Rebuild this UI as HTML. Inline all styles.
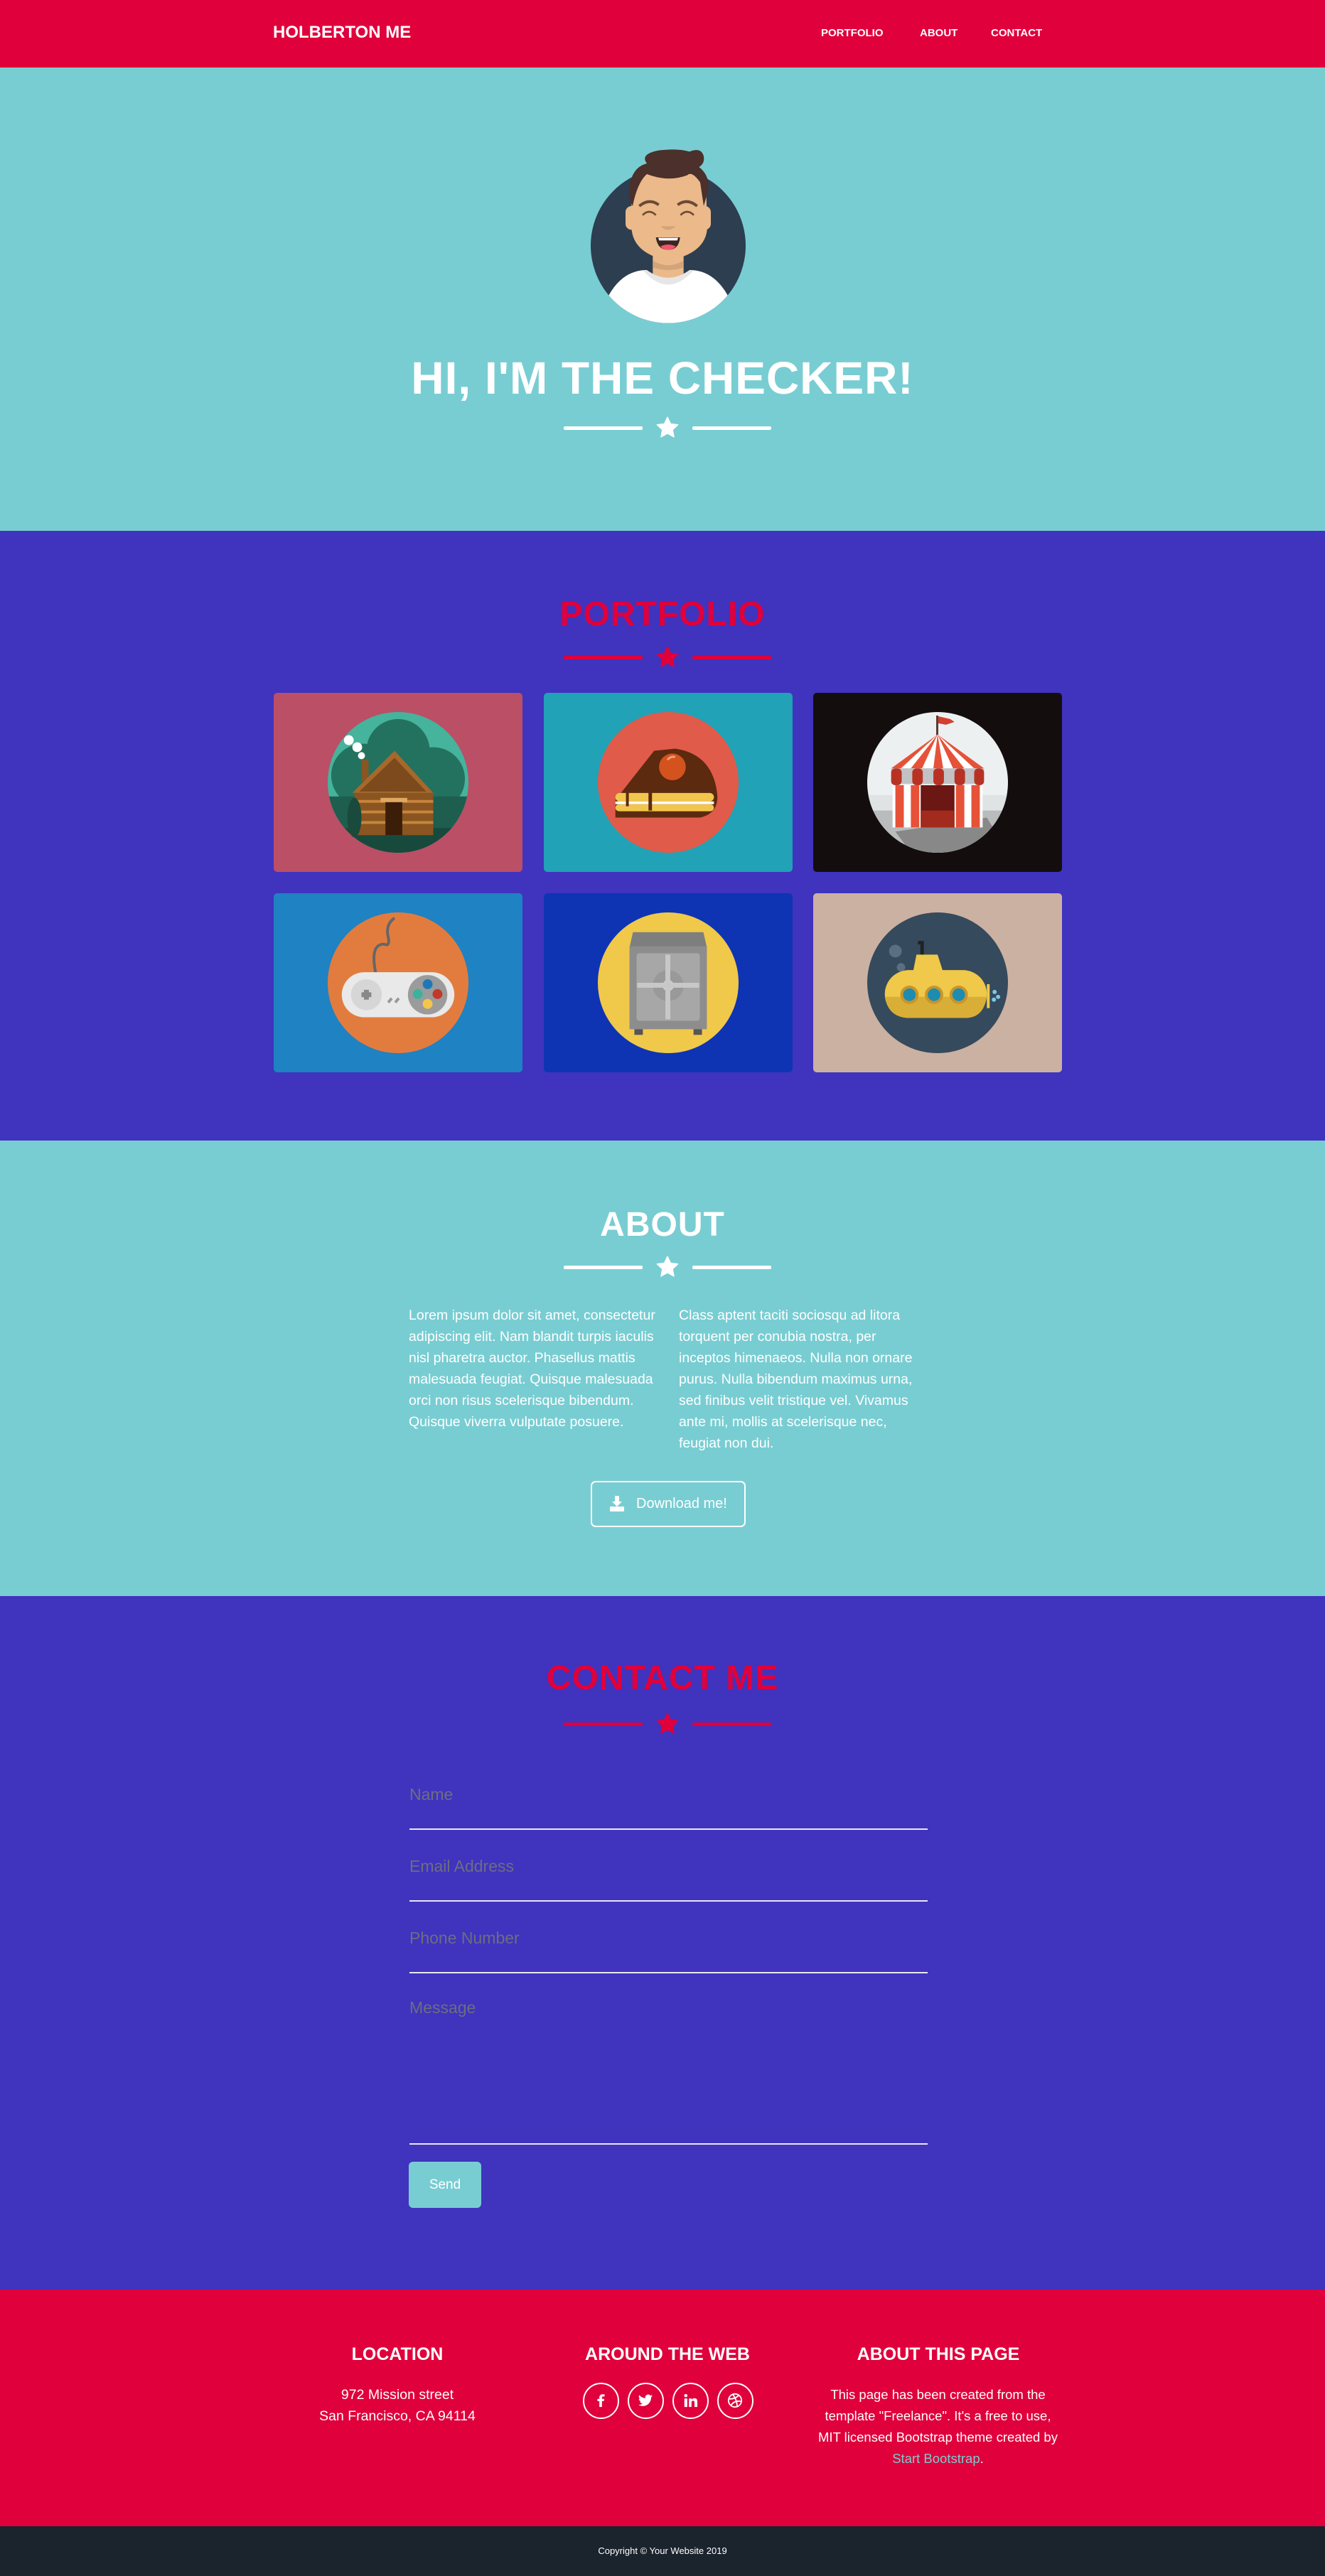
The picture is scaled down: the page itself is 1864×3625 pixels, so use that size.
<!DOCTYPE html>
<html><head><meta charset="utf-8">
<style>
*{margin:0;padding:0;box-sizing:border-box}
body{width:1864px;height:3625px;position:relative;font-family:"Liberation Sans",sans-serif;overflow:hidden;background:#fff}
.abs{position:absolute}
.sec{position:absolute;left:0;width:1864px}
.h{font-weight:bold;text-align:center;position:absolute;left:0;width:1864px;line-height:1}
.card{position:absolute;width:350px;height:252px;border-radius:5px;overflow:hidden}
.card svg{position:absolute;left:76px;top:27px;width:198px;height:198px}
.p{position:absolute;color:#fff;font-size:19.5px;line-height:30px}
.lbl{position:absolute;left:576px;color:#6b6e80;font-size:23px;line-height:1}
.ln{position:absolute;left:576px;width:729px;height:2px;background:#e8e8f0}
.fh{position:absolute;color:#fff;font-weight:bold;font-size:25px;text-align:center;width:400px;line-height:1}
.ft{position:absolute;color:#fff;font-size:19.5px;line-height:30px;text-align:center;width:400px}
.soc{position:absolute;top:3353px;width:51px;height:51px;border:2.5px solid #fff;border-radius:50%}
.soc svg{position:absolute;left:12px;top:12px;width:22px;height:22px}
</style></head><body>

<!-- nav -->
<div class="sec" style="top:0;height:95px;background:#e0003b"></div>
<div class="abs" style="left:384px;top:34px;color:#fff;font-weight:bold;font-size:24px;line-height:24px">HOLBERTON ME</div>
<div class="abs" style="left:1155px;top:39px;color:#fff;font-weight:bold;font-size:15px;line-height:15px">PORTFOLIO</div>
<div class="abs" style="left:1294px;top:39px;color:#fff;font-weight:bold;font-size:15px;line-height:15px">ABOUT</div>
<div class="abs" style="left:1394px;top:39px;color:#fff;font-weight:bold;font-size:15px;line-height:15px">CONTACT</div>

<!-- hero -->
<div class="sec" style="top:95px;height:652px;background:#78cdd2"></div>
<svg class="abs" style="left:800px;top:180px" width="270" height="290" viewBox="0 0 810 870">
<defs><clipPath id="cc"><circle cx="420" cy="497" r="327"/></clipPath></defs>
<circle cx="420" cy="497" r="327" fill="#2d3e50"/>
<g clip-path="url(#cc)">
<rect x="355" y="520" width="130" height="120" fill="#ebb98a"/>
<path d="M355 560 Q420 600 485 560 L485 590 Q420 610 355 590Z" fill="#d3a47a"/>
<path d="M170 705 Q230 600 330 600 Q420 690 510 600 Q610 600 670 705 L720 900 L120 900Z" fill="#fff"/>
<path d="M315 603 Q420 720 525 603 L510 600 Q420 665 330 600Z" fill="#e6e6e6"/>
</g>
<path d="M265 250 Q270 180 340 185 L500 190 Q575 200 580 260 L585 420 Q580 530 420 560 Q270 530 265 420Z" fill="#ebb98a"/>
<rect x="240" y="330" width="50" height="100" rx="25" fill="#ebb98a"/>
<rect x="550" y="330" width="50" height="100" rx="25" fill="#ebb98a"/>
<path d="M255 300 Q250 170 330 150 Q300 110 380 95 Q460 85 510 100 Q560 80 570 120 Q575 150 550 165 Q595 200 590 260 L570 330 L555 230 Q520 180 500 200 Q420 230 330 195 Q290 230 270 330Z" fill="#4b302b"/>
<path d="M298 330 Q340 295 380 325" stroke="#6d4a34" stroke-width="12" fill="none"/>
<path d="M460 325 Q500 295 542 330" stroke="#6d4a34" stroke-width="12" fill="none"/>
<path d="M312 368 Q340 340 368 368" stroke="#6d4a34" stroke-width="8" fill="none"/>
<path d="M472 368 Q500 340 528 368" stroke="#6d4a34" stroke-width="8" fill="none"/>
<path d="M388 415 Q420 445 452 415Z" fill="#d3a47a"/>
<path d="M368 462 L470 462 Q465 515 420 515 Q375 515 368 462Z" fill="#3a2520"/>
<path d="M378 464 L462 464 L458 475 L382 475Z" fill="#fff"/>
<path d="M388 500 Q420 485 452 500 Q440 515 420 515 Q398 515 388 500Z" fill="#f2546f"/>
</svg>
<div class="h" style="top:500px;font-size:64px;color:#fff;letter-spacing:1px">HI, I'M THE CHECKER!</div>
<div class="abs" style="left:793px;top:600px;width:111px;height:5px;background:#fff;border-radius:2px"></div>
<div class="abs" style="left:974px;top:600px;width:111px;height:5px;background:#fff;border-radius:2px"></div>
<svg class="abs" style="left:922px;top:585px" width="34" height="34" viewBox="0 0 24 24"><path d="M12 1.5l3.1 6.6 7.2.9-5.3 5 1.4 7.1L12 17.6 5.6 21.1 7 14 1.7 9l7.2-.9z" fill="#fff" stroke="#fff" stroke-linejoin="round" stroke-width="1"/></svg>

<!-- portfolio -->
<div class="sec" style="top:747px;height:858px;background:#4033be"></div>
<div class="h" style="top:841px;font-size:48px;color:#e0003b;letter-spacing:1px">PORTFOLIO</div>
<div class="abs" style="left:793px;top:923px;width:111px;height:5px;background:#e0003b;border-radius:2px"></div>
<div class="abs" style="left:974px;top:923px;width:111px;height:5px;background:#e0003b;border-radius:2px"></div>
<svg class="abs" style="left:922px;top:908px" width="34" height="34" viewBox="0 0 24 24"><path d="M12 1.5l3.1 6.6 7.2.9-5.3 5 1.4 7.1L12 17.6 5.6 21.1 7 14 1.7 9l7.2-.9z" fill="#e0003b" stroke="#e0003b" stroke-linejoin="round"/></svg>

<div class="card" style="left:385px;top:975px;background:#ba4f66">
<svg viewBox="0 0 200 200"><defs><clipPath id="c1"><circle cx="100" cy="100" r="100"/></clipPath></defs>
<circle cx="100" cy="100" r="100" fill="#46b39c"/>
<g clip-path="url(#c1)">
<circle cx="50" cy="90" r="45" fill="#23725f"/><circle cx="100" cy="55" r="45" fill="#23725f"/><circle cx="150" cy="95" r="45" fill="#23725f"/>
<rect x="0" y="120" width="200" height="80" fill="#1d5e4e"/>
<rect x="0" y="165" width="200" height="40" fill="#174a3d"/>
</g>
<circle cx="30" cy="40" r="7" fill="#fff"/><circle cx="42" cy="50" r="7" fill="#fff"/><circle cx="48" cy="62" r="5" fill="#fff"/>
<rect x="48" y="68" width="10" height="30" fill="#8a5520"/>
<path d="M35 115 L95 55 L150 115Z" fill="#a8682b"/>
<path d="M45 113 L95 65 L140 113Z" fill="#7c4a1c"/>
<rect x="38" y="115" width="112" height="60" fill="#8a5520"/>
<g fill="#c8843c"><rect x="38" y="125" width="112" height="4"/><rect x="38" y="140" width="112" height="4"/><rect x="38" y="155" width="112" height="4"/></g>
<rect x="82" y="128" width="24" height="47" fill="#3a1e0a"/>
<rect x="75" y="122" width="38" height="6" fill="#e0a860"/>
<ellipse cx="38" cy="150" rx="10" ry="28" fill="#1a4a3c"/>
</svg></div>

<div class="card" style="left:765px;top:975px;background:#21a2b6">
<svg viewBox="0 0 200 200"><circle cx="100" cy="100" r="100" fill="#e05b4a"/>
<path d="M80 55 L25 125 L25 150 L145 150 Q170 145 170 120 Q165 60 110 52Z" fill="#5c2a0e"/>
<rect x="25" y="115" width="140" height="12" rx="6" fill="#f2c64c"/>
<rect x="25" y="131" width="140" height="10" rx="5" fill="#f2c64c"/>
<rect x="25" y="127" width="140" height="4" fill="#fff"/>
<rect x="40" y="112" width="4" height="22" fill="#5c2a0e"/><rect x="72" y="112" width="5" height="28" fill="#5c2a0e"/>
<circle cx="106" cy="78" r="19" fill="#d3521e"/>
<path d="M99 68 Q104 62 110 64" stroke="#f2a07a" stroke-width="3" fill="none"/>
</svg></div>

<div class="card" style="left:1144px;top:975px;background:#130e0d">
<svg viewBox="0 0 200 200"><defs><clipPath id="c3"><circle cx="100" cy="100" r="100"/></clipPath></defs>
<circle cx="100" cy="100" r="100" fill="#ecf0f1"/>
<g clip-path="url(#c3)">
<rect x="0" y="118" width="200" height="22" fill="#dfe3e4"/>
<rect x="0" y="140" width="200" height="70" fill="#b9bbbc"/>
<path d="M40 170 L170 150 L200 200 L70 210Z" fill="#888"/>
</g>
<rect x="98" y="5" width="3" height="30" fill="#5a3a36"/>
<path d="M101 6 L118 10 L124 14 L112 18 L101 16Z" fill="#d3402e"/>
<path d="M34 80 L100 32 L166 80Z" fill="#fff"/>
<g fill="#e65238"><path d="M100 32 L34 80 L48 80Z"/><path d="M100 32 L62 80 L78 80Z"/><path d="M100 32 L94 80 L108 80Z"/><path d="M100 32 L122 80 L138 80Z"/><path d="M100 32 L152 80 L166 80Z"/></g>
<rect x="34" y="80" width="132" height="22" fill="#c2c2c4"/>
<g fill="#b83224"><rect x="34" y="80" width="15" height="24" rx="6"/><rect x="64" y="80" width="15" height="24" rx="6"/><rect x="94" y="80" width="15" height="24" rx="6"/><rect x="124" y="80" width="15" height="24" rx="6"/><rect x="152" y="80" width="14" height="24" rx="6"/></g>
<rect x="36" y="104" width="128" height="60" fill="#fff"/>
<g fill="#e65238"><rect x="40" y="104" width="12" height="60"/><rect x="62" y="104" width="12" height="60"/><rect x="126" y="104" width="12" height="60"/><rect x="148" y="104" width="12" height="60"/></g>
<rect x="76" y="104" width="48" height="60" fill="#6b1713"/>
<rect x="76" y="140" width="48" height="24" fill="#a22b1e"/>
</svg></div>

<div class="card" style="left:385px;top:1257px;background:#1f82c2">
<svg viewBox="0 0 200 200"><circle cx="100" cy="100" r="100" fill="#e27c3e"/>
<path d="M68 85 Q60 45 80 45 Q90 50 85 30 Q84 15 95 8" stroke="#666" stroke-width="4" fill="none"/>
<rect x="20" y="85" width="160" height="64" rx="32" fill="#e9e9e9"/>
<circle cx="55" cy="117" r="22" fill="#d6d6d6"/><circle cx="142" cy="117" r="28" fill="#9b9b9b"/>
<path d="M48 117 h14 M55 110 v14" stroke="#888" stroke-width="7"/>
<circle cx="142" cy="102" r="7" fill="#1e78b8"/><circle cx="128" cy="116" r="7" fill="#3bb39c"/><circle cx="156" cy="116" r="7" fill="#c0392b"/><circle cx="142" cy="130" r="7" fill="#f2c64c"/>
<path d="M86 128 l5 -6 M96 128 l5 -6" stroke="#999" stroke-width="4"/>
</svg></div>

<div class="card" style="left:765px;top:1257px;background:#0e34b4">
<svg viewBox="0 0 200 200"><circle cx="100" cy="100" r="100" fill="#f0c84a"/>
<path d="M50 28 L150 28 L155 50 L45 50Z" fill="#7e7e7e"/>
<rect x="45" y="48" width="110" height="118" fill="#8d8d8d"/>
<rect x="55" y="58" width="90" height="96" rx="4" fill="#a7a7a7"/>
<circle cx="100" cy="104" r="22" fill="#999"/><circle cx="100" cy="104" r="8" fill="#ccc"/>
<rect x="56" y="100" width="88" height="7" fill="#c8c8c8"/><rect x="96" y="60" width="7" height="92" fill="#c8c8c8"/>
<rect x="52" y="166" width="12" height="8" fill="#555"/><rect x="136" y="166" width="12" height="8" fill="#555"/>
</svg></div>

<div class="card" style="left:1144px;top:1257px;background:#cbb1a2">
<svg viewBox="0 0 200 200"><circle cx="100" cy="100" r="100" fill="#354a5c"/>
<circle cx="40" cy="55" r="9" fill="#5a6f80"/><circle cx="48" cy="78" r="6" fill="#5a6f80"/>
<path d="M72 43 h6 v30" stroke="#222" stroke-width="5" fill="none"/>
<path d="M65 85 L70 60 L100 60 L108 85Z" fill="#f0c84a"/>
<rect x="25" y="82" width="145" height="68" rx="34" fill="#f0c84a"/>
<path d="M25 120 Q30 150 60 150 L140 150 Q165 150 170 120Z" fill="#d8ae36"/>
<circle cx="60" cy="117" r="13" fill="#c7952a"/><circle cx="60" cy="117" r="9" fill="#1e8cb0"/>
<circle cx="95" cy="117" r="13" fill="#c7952a"/><circle cx="95" cy="117" r="9" fill="#1e8cb0"/>
<circle cx="130" cy="117" r="13" fill="#c7952a"/><circle cx="130" cy="117" r="9" fill="#1e8cb0"/>
<rect x="170" y="102" width="4" height="34" fill="#f0c84a"/>
<circle cx="181" cy="113" r="3" fill="#7ec8e8"/><circle cx="186" cy="120" r="3" fill="#7ec8e8"/><circle cx="180" cy="124" r="3" fill="#7ec8e8"/>
</svg></div>

<!-- about -->
<div class="sec" style="top:1605px;height:641px;background:#78cdd2"></div>
<div class="h" style="top:1700px;font-size:48px;color:#fff;letter-spacing:1px">ABOUT</div>
<div class="abs" style="left:793px;top:1781px;width:111px;height:5px;background:#fff;border-radius:2px"></div>
<div class="abs" style="left:974px;top:1781px;width:111px;height:5px;background:#fff;border-radius:2px"></div>
<svg class="abs" style="left:922px;top:1766px" width="34" height="34" viewBox="0 0 24 24"><path d="M12 1.5l3.1 6.6 7.2.9-5.3 5 1.4 7.1L12 17.6 5.6 21.1 7 14 1.7 9l7.2-.9z" fill="#fff" stroke="#fff" stroke-linejoin="round"/></svg>
<div class="p" style="left:575px;top:1836px;width:370px">Lorem ipsum dolor sit amet, consectetur adipiscing elit. Nam blandit turpis iaculis nisl pharetra auctor. Phasellus mattis malesuada feugiat. Quisque malesuada orci non risus scelerisque bibendum. Quisque viverra vulputate posuere.</div>
<div class="p" style="left:955px;top:1836px;width:350px">Class aptent taciti sociosqu ad litora torquent per conubia nostra, per inceptos himenaeos. Nulla non ornare purus. Nulla bibendum maximus urna, sed finibus velit tristique vel. Vivamus ante mi, mollis at scelerisque nec, feugiat non dui.</div>
<div class="abs" style="left:831px;top:2084px;width:218px;height:65px;border:2.5px solid #fff;border-radius:7px;color:#fff;font-size:20px;line-height:60px;padding-left:62px">Download me!</div>
<svg class="abs" style="left:858px;top:2105px" width="20" height="22" viewBox="0 0 20 22"><path d="M7 0h6v8h4l-7 7-7-7h4z" fill="#fff"/><rect x="0" y="15" width="20" height="7" rx="1" fill="#fff"/></svg>

<!-- contact -->
<div class="sec" style="top:2246px;height:976px;background:#4033be"></div>
<div class="h" style="top:2338px;font-size:48px;color:#e0003b;letter-spacing:1px">CONTACT ME</div>
<div class="abs" style="left:793px;top:2424px;width:111px;height:5px;background:#e0003b;border-radius:2px"></div>
<div class="abs" style="left:974px;top:2424px;width:111px;height:5px;background:#e0003b;border-radius:2px"></div>
<svg class="abs" style="left:922px;top:2409px" width="34" height="34" viewBox="0 0 24 24"><path d="M12 1.5l3.1 6.6 7.2.9-5.3 5 1.4 7.1L12 17.6 5.6 21.1 7 14 1.7 9l7.2-.9z" fill="#e0003b" stroke="#e0003b" stroke-linejoin="round"/></svg>
<div class="lbl" style="top:2514px">Name</div><div class="ln" style="top:2573px"></div>
<div class="lbl" style="top:2615px">Email Address</div><div class="ln" style="top:2674px"></div>
<div class="lbl" style="top:2716px">Phone Number</div><div class="ln" style="top:2775px"></div>
<div class="lbl" style="top:2814px">Message</div><div class="ln" style="top:3016px"></div>
<div class="abs" style="left:575px;top:3042px;width:102px;height:65px;background:#78cdd2;border-radius:6px;color:#fff;font-size:19px;line-height:65px;text-align:center">Send</div>

<!-- footer -->
<div class="sec" style="top:3222px;height:333px;background:#e0003b"></div>
<div class="fh" style="left:359px;top:3301px">LOCATION</div>
<div class="fh" style="left:739px;top:3301px">AROUND THE WEB</div>
<div class="fh" style="left:1120px;top:3301px">ABOUT THIS PAGE</div>
<div class="ft" style="left:359px;top:3355px">972 Mission street<br>San Francisco, CA 94114</div>
<div class="ft" style="left:1147px;top:3355px;width:345px;font-size:18.5px">This page has been created from the template "Freelance". It's a free to use, MIT licensed Bootstrap theme created by <span style="color:#78cdd2">Start Bootstrap</span>.</div>
<div class="soc" style="left:820px"><svg viewBox="0 0 24 24"><path d="M14 22V13h3l.5-3.5H14V7.5c0-1 .3-1.7 1.8-1.7H18V2.6C17.6 2.5 16.4 2.4 15 2.4c-3 0-5 1.8-5 5.1v2H7V13h3v9z" fill="#fff"/></svg></div>
<div class="soc" style="left:883px"><svg viewBox="0 0 24 24"><path d="M23 5c-.8.4-1.7.6-2.6.7.9-.6 1.6-1.4 2-2.5-.9.5-1.900.9-2.9 1.1A4.5 4.5 0 0 0 11.8 8.4 12.8 12.8 0 0 1 2.5 3.7a4.5 4.5 0 0 0 1.4 6c-.7 0-1.4-.2-2-.6 0 2.2 1.5 4 3.6 4.4-.7.2-1.4.2-2 .1.6 1.8 2.2 3.100 4.2 3.1A9 9 0 0 1 1 18.6 12.8 12.8 0 0 0 7.9 20.6c8.3 0 12.8-6.9 12.8-12.8v-.6C21.6 6.6 22.4 5.8 23 5z" fill="#fff"/></svg></div>
<div class="soc" style="left:946px"><svg viewBox="0 0 24 24"><rect x="3" y="9" width="4.5" height="13" fill="#fff"/><circle cx="5.2" cy="4.5" r="2.5" fill="#fff"/><path d="M10 9h4.3v1.8c.6-1.1 2-2.2 4.1-2.2 4.3 0 4.6 2.8 4.6 6.4V22h-4.5v-6.2c0-1.5 0-3.4-2.1-3.4s-2.4 1.6-2.4 3.3V22H10z" fill="#fff"/></svg></div>
<div class="soc" style="left:1009px"><svg viewBox="0 0 24 24" fill="none" stroke="#fff" stroke-width="2"><circle cx="12" cy="12" r="10"/><path d="M3 9.5c6 .5 11-1.5 15-5.5M6 19.5c3-5 8-7.5 15.5-6M8.5 2.5c4 5 6.5 11 7 19"/></svg></div>

<div class="sec" style="top:3555px;height:70px;background:#1b232d"></div>
<div class="h" style="top:3583px;font-size:13px;color:#fff;font-weight:normal">Copyright © Your Website 2019</div>
</body></html>
